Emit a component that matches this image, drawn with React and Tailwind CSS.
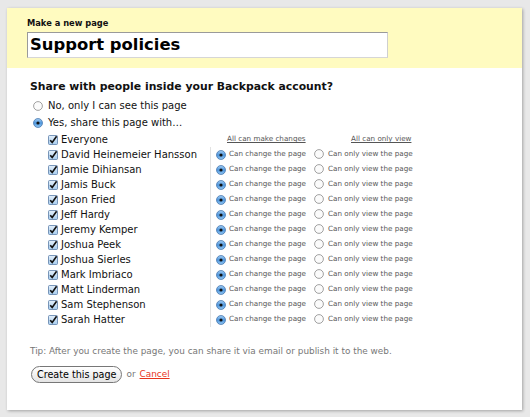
import React from "react";

const people = [
  "David Heinemeier Hansson",
  "Jamie Dihiansan",
  "Jamis Buck",
  "Jason Fried",
  "Jeff Hardy",
  "Jeremy Kemper",
  "Joshua Peek",
  "Joshua Sierles",
  "Mark Imbriaco",
  "Matt Linderman",
  "Sam Stephenson",
  "Sarah Hatter",
];

function Radio({ on }) {
  return on ? (
    <svg width="10" height="10" viewBox="0 0 10 10" className="shrink-0">
      <defs>
        <linearGradient id="rg" x1="0" y1="0" x2="0" y2="1">
          <stop offset="0" stopColor="#a6d0f4" />
          <stop offset="0.5" stopColor="#4f97de" />
          <stop offset="1" stopColor="#94c8f2" />
        </linearGradient>
      </defs>
      <circle cx="5" cy="5" r="4.5" fill="url(#rg)" stroke="#3d6fa8" strokeWidth="0.7" />
      <circle cx="5" cy="5" r="1.6" fill="#111" />
    </svg>
  ) : (
    <svg width="10" height="10" viewBox="0 0 10 10" className="shrink-0">
      <circle cx="5" cy="5" r="4.4" fill="#fbfbfb" stroke="#8a8a8a" strokeWidth="0.8" />
    </svg>
  );
}

function Check() {
  return (
    <svg width="10" height="10" viewBox="0 0 10 10" className="shrink-0">
      <defs>
        <linearGradient id="cg" x1="0" y1="0" x2="0" y2="1">
          <stop offset="0" stopColor="#e4f0fb" />
          <stop offset="1" stopColor="#a8cdee" />
        </linearGradient>
      </defs>
      <rect x="0.5" y="0.5" width="9" height="9" rx="1" fill="url(#cg)" stroke="#5a7ea8" strokeWidth="0.8" />
      <path d="M2.2 5.2 L4.2 7.4 L8.6 1.2" fill="none" stroke="#111" strokeWidth="1.6" />
    </svg>
  );
}

export default function App() {
  return (
    <div
      className="w-[530px] h-[417px] bg-[#e8e8e8] pt-[8px] pl-[7px] overflow-hidden"
      style={{ fontFamily: '"DejaVu Sans", "Liberation Sans", sans-serif' }}
    >
      <div className="w-[515px] h-[402px] bg-white shadow-[1px_1px_3px_rgba(0,0,0,0.3)]">
        <div className="bg-[#fffbc0] h-[60px] pl-[20px] pt-[9px]">
          <div className="text-[8.3px] font-bold text-[#111] leading-[12px]">Make a new page</div>
          <div className="mt-[3px] w-[361px] h-[26px] bg-white border border-[#9a9a9a] border-r-[#cfcfcf] border-b-[#d6d6d6] flex items-center pl-[2px]">
            <span className="text-[16.4px] font-bold text-black leading-none">Support policies</span>
          </div>
        </div>
        <div className="pl-[23px] pt-[10px]">
          <div className="text-[10.85px] font-bold text-[#111] leading-[18px]">
            Share with people inside your Backpack account?
          </div>
          <div className="flex items-center gap-[5px] mt-[1px] h-[17px] pl-[3px]">
            <Radio on={false} />
            <span className="text-[10px] text-[#111]">No, only I can see this page</span>
          </div>
          <div className="flex items-center gap-[5px] h-[17px] pl-[3px]">
            <Radio on={true} />
            <span className="text-[10px] text-[#111]">Yes, share this page with…</span>
          </div>
          <div className="pl-[18px] mt-[1px]">
            <div className="flex h-[15px] items-center">
              <div className="w-[162px] flex items-center gap-[3px]">
                <Check />
                <span className="text-[10px] text-[#111]">Everyone</span>
              </div>
              <div className="w-[104px] pl-[17px] text-[7.2px] text-[#555] underline whitespace-nowrap">All can make changes</div>
              <div className="pl-[37px] text-[7.2px] text-[#555] underline whitespace-nowrap">All can only view</div>
            </div>
            {people.map((p) => (
              <div key={p} className="flex h-[15px] items-center">
                <div className="w-[162px] flex items-center gap-[3px] h-full">
                  <Check />
                  <span className="text-[10px] text-[#111] whitespace-nowrap">{p}</span>
                </div>
                <div className="h-full border-l border-[#e2e2e2] pl-[5px] flex items-center gap-[3px] w-[104px]">
                  <Radio on={true} />
                  <span className="text-[7.2px] text-[#555] whitespace-nowrap">Can change the page</span>
                </div>
                <div className="flex items-center gap-[4px]">
                  <Radio on={false} />
                  <span className="text-[7.2px] text-[#555] whitespace-nowrap">Can only view the page</span>
                </div>
              </div>
            ))}
          </div>
          <div className="mt-[18px] text-[8.9px] text-[#777] leading-[12px]">
            Tip: After you create the page, you can share it via email or publish it to the web.
          </div>
          <div className="mt-[9px] flex items-center gap-[4px] pl-[1px]">
            <button className="h-[17px] px-[5px] rounded-full border border-[#777] bg-gradient-to-b from-white to-[#e4e4e4] text-[9.6px] text-black leading-none">
              Create this page
            </button>
            <span className="text-[8.9px] text-[#777]">or</span>
            <a className="text-[8.9px] text-[#e8341c] underline">Cancel</a>
          </div>
        </div>
      </div>
    </div>
  );
}
